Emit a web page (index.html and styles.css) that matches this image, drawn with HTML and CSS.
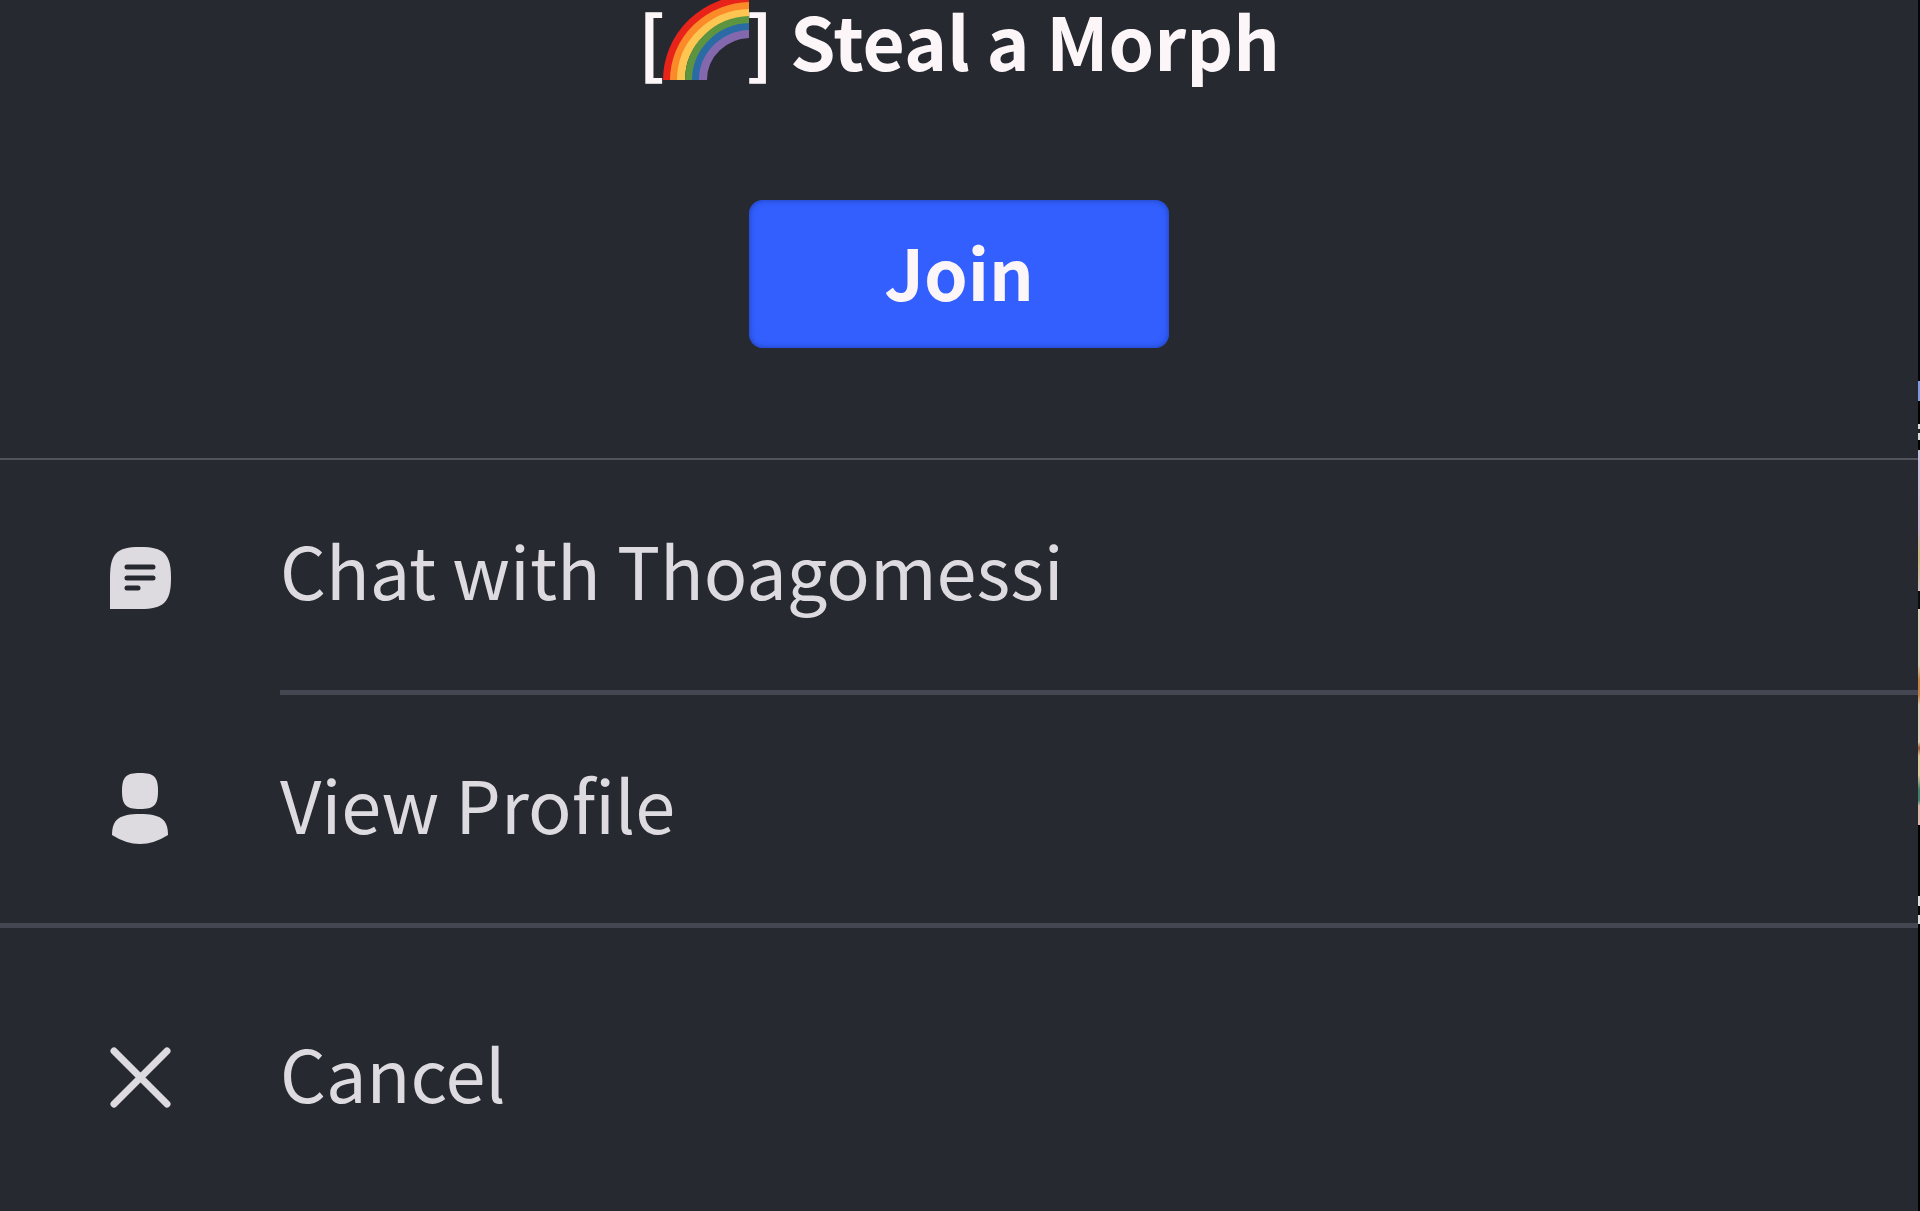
FILE: index.html
```html
<!DOCTYPE html>
<html lang="en">
<head>
	<meta charset="UTF-8">
	<meta name="viewport" content="width=device-width, initial-scale=1">
	<title>Steal a Morph</title>
	<link rel="stylesheet" href="styles.css">
</head>
<body>
	<main class="sheet">
		<section class="game">
			<h1 class="game-title">
				<span>[</span>
				<svg class="rainbow" viewBox="0 0 86 80" role="img" aria-label="Rainbow">
					<g fill="none" stroke-width="8">
						<path stroke="#e8231a" d="M4 80A84 81 0 0 1 88 -1"/>
						<path stroke="#fb8a28" d="M11 80A77 74 0 0 1 88 6"/>
						<path stroke="#fdc653" d="M18 80A70 67 0 0 1 88 13"/>
						<path stroke="#5c9440" d="M26 80A62 60 0 0 1 88 20"/>
						<path stroke="#2a6ba6" d="M33 80A55 53 0 0 1 88 27"/>
						<path stroke="#8468ae" d="M40 80A48 46 0 0 1 88 34"/>
					</g>
				</svg>
				<span>] Steal a Morph</span>
			</h1>
			<button class="join" type="button">Join</button>
		</section>
		<nav class="menu">
			<button class="item chat" type="button">
				<svg class="icon" viewBox="0 0 72 72" aria-hidden="true">
					<path fill="#dddbe0" d="M6 67V36C6 12 12 5 36 5S67 12 67 36S60 67 36 67Z"/>
					<path stroke="#262930" stroke-width="5" stroke-linecap="round" d="M23 25H49M23 36H49M23 46H34"/>
				</svg>
				<span class="label">Chat with Thoagomessi</span>
			</button>
			<button class="item profile" type="button">
				<svg class="icon" viewBox="0 0 72 72" aria-hidden="true">
					<path fill="#dddbe0" d="M18 18C18 4 22 0 36 0S54 4 54 18S50 36 36 36S18 32 18 18Z"/>
					<path fill="#dddbe0" d="M8 62C8 46 16 41 36 41S64 46 64 62Q50 71 36 71T8 62Z"/>
				</svg>
				<span class="label">View Profile</span>
			</button>
			<button class="item cancel" type="button">
				<svg class="icon" viewBox="0 0 72 72" aria-hidden="true">
					<path stroke="#dddbe0" stroke-width="7" stroke-linecap="round" d="M10 9L63 62M63 9L10 62"/>
				</svg>
				<span class="label">Cancel</span>
			</button>
		</nav>
	</main>
	<div class="edge"></div>
</body>
</html>
```

FILE: styles.css
```css
* {
	box-sizing: border-box;
}

body {
	margin: 0;
	min-height: 100vh;
	display: flex;
	background: #262930;
	color: #dddbe0;
	font-family: "Noto Sans CJK SC", "Noto Sans", sans-serif;
}

button {
	border: 0;
	margin: 0;
	background: none;
	color: inherit;
	font: inherit;
	cursor: pointer;
}

.sheet {
	flex: 1;
	display: flex;
	flex-direction: column;
}

/* strip of the page that shows past the sheet */
.edge {
	width: 2px;
	background: linear-gradient(
		#05060a 381px,
		#7d9be0 381px 401px,
		#000 401px 424px,
		#ddd 424px 429px,
		#222 429px 433px,
		#ddd 433px 440px,
		#000 440px 450px,
		#c9c4dc 450px,
		#cdb0cc 530px,
		#c8b878 555px,
		#d8bfc4 591px,
		#0c0c0c 591px 609px,
		#ddd2b8 609px 665px,
		#c98a48 680px,
		#c98a48 695px,
		#ddd2b8 705px 742px,
		#a0603c 748px,
		#ddcf9c 756px 775px,
		#3f8468 790px,
		#3f8468 800px,
		#dcb8a8 806px 825px,
		#000 825px 896px,
		#ddd 896px 906px,
		#000 906px 915px,
		#ddd 915px 924px,
		#000 924px
	);
}

.game {
	display: flex;
	flex-direction: column;
	align-items: center;
	padding-bottom: 110px;
	border-bottom: 2px solid #50525c;
}

.game-title {
	display: flex;
	margin: 0;
	color: #fdf6f9;
	font-size: 73px;
	font-weight: 700;
	line-height: 78px;
	white-space: pre;
}

.rainbow {
	width: 86px;
	height: 80px;
	margin: 0 -3px;
}

.join {
	width: 420px;
	height: 148px;
	margin-top: 120px;
	padding: 0 0 6px;
	border-radius: 14px;
	background: #335fff;
	box-shadow: inset 0 0 6px #1c3fb0;
	color: #fdf6f9;
	font-size: 70px;
	font-weight: 700;
	line-height: 88px;
}

.menu {
	flex: 1;
	display: flex;
	flex-direction: column;
}

.item {
	display: flex;
	align-items: center;
	gap: 104px;
	height: 235px;
	padding: 0 0 0 104px;
	text-align: left;
}

.icon {
	width: 72px;
	height: 72px;
	flex: none;
	fill: none;
}

.label {
	flex: 1;
	align-self: stretch;
	display: flex;
	align-items: center;
	padding-bottom: 12px;
	font-size: 72px;
	line-height: 88px;
}

.chat .label {
	border-bottom: 5px solid #444651;
}

.profile {
	height: 233px;
	border-bottom: 5px solid #444651;
}

.cancel {
	flex: 1;
	padding-top: 16px;
}
```
